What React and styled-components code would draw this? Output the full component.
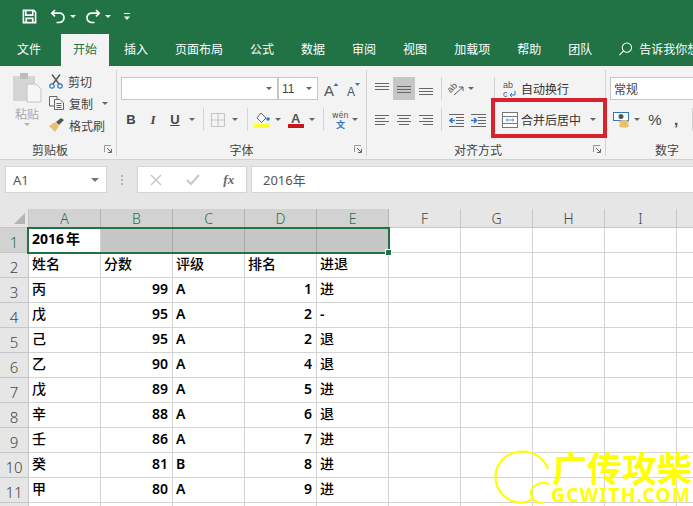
import styled, { createGlobalStyle } from "styled-components";

const CJK = `"Noto Sans CJK SC", "Noto Sans", sans-serif`;
const GREEN = "#217346";

const Global = createGlobalStyle`
    html, body { margin: 0; padding: 0; background: #fff; }
    #root { width: 693px; height: 506px; overflow: hidden; }
`;

const Page = styled.div`
    position: relative;
    width: 693px;
    height: 506px;
    overflow: hidden;
    font-family: ${CJK};
    font-size: 12px;
    color: #444;
`;

const TitleBar = styled.div`
    display: flex;
    align-items: center;
    height: 33px;
    padding-left: 20px;
    background: ${GREEN};
`;

const TitleIcon = styled.div`
    display: flex;
    align-items: center;
    justify-content: center;
    width: ${(p) => p.$w}px;
    margin-left: ${(p) => p.$ml || 0}px;
`;

const TabBar = styled.div`
    display: flex;
    align-items: stretch;
    height: 33px;
    padding-left: 5px;
    background: ${GREEN};
`;

const Tab = styled.div`
    display: flex;
    align-items: center;
    padding: 0 12px 4px;
    margin-right: ${(p) => (p.$first ? 8 : 3)}px;
    margin-top: 1px;
    color: ${(p) => (p.$active ? GREEN : "#fff")};
    background: ${(p) => (p.$active ? "#f3f3f3" : "transparent")};
    white-space: nowrap;
`;

const TellMe = styled.div`
    display: flex;
    align-items: center;
    gap: 6px;
    margin-left: 11px;
    padding-bottom: 2px;
    color: #fff;
    white-space: nowrap;
`;

const Ribbon = styled.div`
    position: relative;
    display: flex;
    height: 93px;
    background: #f3f3f3;
    border-bottom: 1px solid #d2d2d2;
    overflow: hidden;
`;

const Group = styled.div`
    position: relative;
    flex: none;
    display: flex;
    flex-direction: column;
    width: ${(p) => p.$w}px;
    height: 86px;
    margin-top: 4px;
    box-sizing: border-box;
    border-right: ${(p) => (p.$last ? "none" : "1px solid #d4d4d4")};
`;

const Rows = styled.div`
    flex: 1;
    display: flex;
    flex-direction: column;
    gap: 8px;
    padding: 7px 0 0 4px;
`;

const Row = styled.div`
    display: flex;
    align-items: center;
    height: 23px;
`;

const Tool = styled.div`
    flex: none;
    display: flex;
    align-items: center;
    justify-content: center;
    align-self: stretch;
    width: ${(p) => p.$w}px;
    background: ${(p) => (p.$on ? "#c6c6c6" : "transparent")};
    font-family: "Liberation Sans", sans-serif;
`;

const BoldTool = styled(Tool)`
    font-size: 13px;
    font-weight: 700;
    text-decoration: ${(p) => (p.$under ? "underline" : "none")};
`;

const ItalicTool = styled(Tool)`
    font-family: "Liberation Serif", serif;
    font-size: 13px;
    font-style: italic;
    font-weight: 700;
`;

const NumTool = styled(Tool)`
    font-size: 15px;
    font-weight: ${(p) => (p.$bold ? 700 : 400)};
`;

const Sep = styled.span`
    display: block;
    width: 1px;
    height: 23px;
    background: #d4d4d4;
`;

const Caret = styled.span`
    display: block;
    width: 0;
    height: 0;
    border-left: ${(p) => p.$s || 3}px solid transparent;
    border-right: ${(p) => p.$s || 3}px solid transparent;
    border-top: ${(p) => p.$s || 3}px solid ${(p) => p.$c || "#666"};
`;

const GroupLabel = styled.div`
    position: relative;
    height: 16px;
    padding-right: ${(p) => p.$pr || 0}px;
    width: ${(p) => (p.$w ? `${p.$w}px` : "auto")};
    line-height: 19px;
    text-align: center;
    color: #444;
`;

const Launcher = styled.svg`
    position: absolute;
    right: 4px;
    top: 5px;
`;

const ClipBody = styled.div`
    flex: 1;
    display: flex;
    padding-left: 12px;
`;

const Paste = styled.div`
    display: flex;
    flex-direction: column;
    align-items: center;
    width: 30px;
    margin-top: 2px;
    gap: 1px;
    color: #a8a8a8;
`;

const ClipList = styled.div`
    display: flex;
    flex-direction: column;
    margin-left: 7px;
`;

const ClipItem = styled.div`
    display: flex;
    align-items: center;
    gap: 5px;
    height: 22px;
    white-space: nowrap;
`;

const Input = styled.div`
    flex: none;
    display: flex;
    align-items: center;
    justify-content: space-between;
    box-sizing: border-box;
    width: ${(p) => p.$w}px;
    height: 23px;
    padding: 0 5px 0 3px;
    background: #fff;
    border: 1px solid #c6c6c6;
    font-family: "Liberation Sans", ${CJK};
`;

const WrapLabel = styled.span`
    flex: none;
    width: ${(p) => (p.$w ? `${p.$w}px` : "auto")};
    white-space: nowrap;
    color: #333;
`;

const RedBox = styled.div`
    position: absolute;
    left: 491px;
    top: 32px;
    box-sizing: border-box;
    width: 116px;
    height: 40px;
    border: 4px solid #d8222d;
`;

const FormulaStrip = styled.div`
    display: flex;
    align-items: center;
    height: 49px;
    padding: 0 0 10px 5px;
    box-sizing: border-box;
    background: #e6e6e6;
`;

const NameBox = styled.div`
    display: flex;
    align-items: center;
    justify-content: space-between;
    box-sizing: border-box;
    width: 102px;
    height: 27px;
    padding: 0 7px;
    background: #fff;
    border: 1px solid #d4d4d4;
    font-family: "Noto Sans", sans-serif;
    font-size: 13px;
    color: #555;
`;

const Dots = styled.div`
    display: flex;
    flex-direction: column;
    gap: 2px;
    margin: 0 14px;
    span {
        display: block;
        width: 2px;
        height: 2px;
        background: #b4b4b4;
    }
`;

const FxBox = styled.div`
    display: flex;
    align-items: center;
    justify-content: space-around;
    box-sizing: border-box;
    width: 110px;
    height: 27px;
    background: #fff;
    border: 1px solid #d4d4d4;
    color: #666;
`;

const FxText = styled.span`
    font-family: "Liberation Serif", serif;
    font-style: italic;
    font-weight: 700;
    font-size: 13px;
`;

const FormulaInput = styled.div`
    flex: 1;
    display: flex;
    align-items: center;
    box-sizing: border-box;
    height: 27px;
    margin-left: 4px;
    padding-left: 11px;
    background: #fff;
    border: 1px solid #d4d4d4;
    border-right: none;
    font-family: "Noto Sans", ${CJK};
    font-size: 13px;
    color: #555;
`;

const Sheet = styled.div`
    position: relative;
    display: grid;
    grid-template-columns: 29px repeat(10, 72px);
    grid-template-rows: 19px repeat(12, 25px);
`;

const Corner = styled.div`
    display: flex;
    align-items: flex-end;
    justify-content: flex-end;
    padding: 0 3px 3px 0;
    background: #e6e6e6;
    border-right: 1px solid #c6c6c6;
    border-bottom: 1px solid #c6c6c6;
    box-sizing: border-box;
`;

const ColHead = styled.div`
    display: flex;
    align-items: center;
    justify-content: center;
    box-sizing: border-box;
    background: ${(p) => (p.$sel ? "#d2d2d2" : "#e6e6e6")};
    color: ${(p) => (p.$sel ? GREEN : "#444")};
    border-right: 1px solid ${(p) => (p.$sel ? "#b4b4b4" : "#c6c6c6")};
    border-bottom: 1px solid #c6c6c6;
    font-family: "Noto Sans", sans-serif;
    font-size: 14px;
    font-weight: 300;
`;

const RowHead = styled.div`
    display: flex;
    align-items: flex-end;
    justify-content: center;
    box-sizing: border-box;
    background: ${(p) => (p.$sel ? "#d2d2d2" : "#e6e6e6")};
    color: ${(p) => (p.$sel ? GREEN : "#444")};
    border-right: 1px solid #c6c6c6;
    border-bottom: 1px solid #c6c6c6;
    font-family: "Noto Sans", sans-serif;
    font-size: 15px;
    font-weight: 300;
    line-height: 20px;
`;

const Cell = styled.div`
    display: flex;
    align-items: center;
    justify-content: ${(p) => (p.$num ? "flex-end" : "flex-start")};
    box-sizing: border-box;
    padding: 0 4px 4px 3px;
    white-space: nowrap;
    background: ${(p) => (p.$gray ? "#c6c6c6" : "#fff")};
    border-right: 1px solid ${(p) => (p.$gray ? "#a8a8a8" : "#d4d4d4")};
    border-bottom: 1px solid #d4d4d4;
    color: #000;
    font-family: ${(p) => (p.$latin ? `"Noto Sans", sans-serif` : CJK)};
    font-size: 14px;
    font-weight: ${(p) => (p.$latin ? 600 : 500)};
`;

const TitleCell = styled(Cell)`
    font-family: "Noto Sans", ${CJK};
    font-weight: 700;
`;

const TitleYear = styled.span`
    margin-left: 2px;
    font-family: ${CJK};
`;

const Selection = styled.div`
    position: absolute;
    left: 27px;
    top: 18px;
    box-sizing: border-box;
    width: 363px;
    height: 27px;
    border: 2px solid ${GREEN};
    pointer-events: none;
    &::after {
        content: "";
        position: absolute;
        right: -4px;
        bottom: -4px;
        width: 5px;
        height: 5px;
        background: ${GREEN};
        border: 1px solid #fff;
    }
`;

const Watermark = styled.div`
    position: absolute;
    left: 494px;
    top: 450px;
    display: flex;
    color: #ffff00;
    pointer-events: none;
`;

const MarkText = styled.div`
    display: flex;
    flex-direction: column;
    margin-top: -2px;
    margin-left: 1px;
`;

const MarkTitle = styled.div`
    margin-left: 1px;
    font-family: ${CJK};
    font-size: 35px;
    font-weight: 700;
    line-height: 38px;
    white-space: nowrap;
`;

const MarkSub = styled.div`
    font-family: "Noto Sans", sans-serif;
    font-size: 19px;
    font-weight: 700;
    line-height: 19px;
    letter-spacing: 1.4px;
    white-space: nowrap;
`;

const Launch = () => (
    <Launcher width="8" height="8" viewBox="0 0 8 8" fill="none">
        <path d="M0.5 7V0.5H7" stroke="#999" />
        <path d="M3 3L7 7M4 7.5H7.5V4" stroke="#666" />
    </Launcher>
);

const Lines = ({ rows }) => (
    <svg width="16" height="16" viewBox="0 0 16 16" stroke="#666" fill="none">
        {rows.map(([y, a, b]) => (
            <path key={y} d={`M${a} ${y}.5H${b}`} />
        ))}
    </svg>
);

const AlignTop = () => <Lines rows={[[2, 1, 15], [5, 1, 15], [8, 1, 15]]} />;
const AlignMid = () => <Lines rows={[[5, 1, 15], [8, 1, 15], [11, 1, 15]]} />;
const AlignBot = () => <Lines rows={[[7, 1, 15], [10, 1, 15], [13, 1, 15]]} />;
const AlignL = () => <Lines rows={[[3, 1, 15], [6, 1, 11], [9, 1, 15], [12, 1, 11]]} />;
const AlignC = () => <Lines rows={[[3, 1, 15], [6, 3, 13], [9, 1, 15], [12, 3, 13]]} />;
const AlignR = () => <Lines rows={[[3, 1, 15], [6, 5, 15], [9, 1, 15], [12, 5, 15]]} />;

const Indent = ({ flip }) => (
    <svg width="17" height="16" viewBox="0 0 17 16" fill="none">
        <path d="M1 2.5H16M8 5.5H16M8 8.5H16M8 11.5H16M1 14.5H16" stroke="#666" />
        {flip ? (
            <path d="M1 8.5H6M4 6L6.5 8.5L4 11" stroke="#2b79c2" strokeWidth="1.6" />
        ) : (
            <path d="M7 8.5H2M4.5 6L2 8.5L4.5 11" stroke="#2b79c2" strokeWidth="1.6" />
        )}
    </svg>
);

const cols = ["A", "B", "C", "D", "E", "F", "G", "H", "I", "J"];

const data = [
    ["丙", 99, "A", 1, "进"],
    ["戊", 95, "A", 2, "-"],
    ["己", 95, "A", 2, "退"],
    ["乙", 90, "A", 4, "退"],
    ["戊", 89, "A", 5, "进"],
    ["辛", 88, "A", 6, "退"],
    ["壬", 86, "A", 7, "进"],
    ["癸", 81, "B", 8, "进"],
    ["甲", 80, "A", 9, "进"],
    ["", "", "", "", ""],
];

const tabs = ["开始", "插入", "页面布局", "公式", "数据", "审阅", "视图", "加载项", "帮助", "团队"];

function Toolbar() {
    return (
        <>
            <TitleBar>
                <TitleIcon $w={18}>
                    <svg width="15" height="15" viewBox="0 0 16 16" fill="none" stroke="#fff" strokeWidth="1.7">
                        <path d="M1.5 1.5H12.5L14.5 3.5V14.5H1.5Z" />
                        <path d="M4 2V6.5H11.5V2" />
                        <path d="M4.5 14.5V10H11.5V14.5" />
                    </svg>
                </TitleIcon>
                <TitleIcon $w={16} $ml={12}>
                    <svg width="16" height="16" viewBox="0 0 16 16" fill="none" stroke="#fff" strokeWidth="1.7">
                        <path d="M5 1L1.8 4.2L5 7.4" />
                        <path d="M2 4.2H9.5C12 4.2 14 6 14 8.6C14 11.3 12 13.5 9 13.5H6.5" />
                    </svg>
                </TitleIcon>
                <TitleIcon $w={14}><Caret $c="#fff" /></TitleIcon>
                <TitleIcon $w={16} $ml={5}>
                    <svg width="16" height="16" viewBox="0 0 16 16" fill="none" stroke="#fff" strokeWidth="1.7">
                        <path d="M11 1L14.2 4.2L11 7.4" />
                        <path d="M14 4.2H6.5C4 4.2 2 6 2 8.6C2 11.3 4 13.5 7 13.5H9.5" />
                    </svg>
                </TitleIcon>
                <TitleIcon $w={14}><Caret $c="#fff" /></TitleIcon>
                <TitleIcon $w={24}>
                    <svg width="6" height="8" viewBox="0 0 6 8" fill="#fff">
                        <rect y="0" width="6" height="1" />
                        <path d="M0 3.5H6L3 7Z" />
                    </svg>
                </TitleIcon>
            </TitleBar>
            <TabBar>
                <Tab $first>文件</Tab>
                {tabs.map((t) => (
                    <Tab key={t} $active={t === "开始"}>{t}</Tab>
                ))}
                <TellMe>
                    <svg width="15" height="16" viewBox="0 0 16 16" fill="none" stroke="#fff" strokeWidth="1.1">
                        <circle cx="9.5" cy="6.5" r="5" />
                        <path d="M6 10L1.5 14.5" />
                    </svg>
                    告诉我你想要做什么
                </TellMe>
            </TabBar>
        </>
    );
}

function ClipboardGroup() {
    return (
        <Group $w={117}>
            <ClipBody>
                <Paste>
                    <svg width="30" height="32" viewBox="0 0 30 32">
                        <rect x="1" y="4" width="22" height="25" fill="#d6d4d6" />
                        <rect x="8" y="1" width="8" height="6" fill="#bdbbbd" />
                        <path d="M15 12H24L29 17V30H15Z" fill="#f6f6f6" stroke="#c4c4c4" />
                    </svg>
                    <span>粘贴</span>
                    <Caret $c="#b4b4b4" />
                </Paste>
                <ClipList>
                    <ClipItem>
                        <svg width="14" height="15" viewBox="0 0 14 15" fill="none">
                            <path d="M3 0.5L10 10M11 0.5L4 10" stroke="#555" strokeWidth="1.4" />
                            <circle cx="3" cy="12" r="2.2" stroke="#2b79c2" strokeWidth="1.2" />
                            <circle cx="11" cy="12" r="2.2" stroke="#2b79c2" strokeWidth="1.2" />
                        </svg>
                        剪切
                    </ClipItem>
                    <ClipItem>
                        <svg width="15" height="14" viewBox="0 0 15 14" fill="#f6f6f6" stroke="#666">
                            <path d="M0.5 0.5H8V10H0.5Z" />
                            <path d="M5.5 3.5H11L14.5 7V13.5H5.5Z" />
                            <path d="M7.5 7.5H12.5M7.5 9.5H12.5M7.5 11.5H12.5" />
                        </svg>
                        <span>复制</span>
                        <Tool $w={14}><Caret /></Tool>
                    </ClipItem>
                    <ClipItem>
                        <svg width="15" height="14" viewBox="0 0 15 14">
                            <path d="M0 8L6 4L10 8L6 14Z" fill="#eabf74" />
                            <path d="M7 4L12 0L15 2L10 7Z" fill="#555" />
                        </svg>
                        格式刷
                    </ClipItem>
                </ClipList>
            </ClipBody>
            <GroupLabel $pr={16}>剪贴板<Launch /></GroupLabel>
        </Group>
    );
}

function FontGroup() {
    return (
        <Group $w={250}>
            <Rows>
                <Row>
                    <Input $w={157}>
                        <span />
                        <Caret />
                    </Input>
                    <Input $w={40}>
                        <span>11</span>
                        <Caret />
                    </Input>
                    <Tool $w={28}>
                        <svg width="18" height="18" viewBox="0 0 18 18">
                            <text x="1" y="16" fontSize="15" fill="#555" fontFamily="Liberation Sans">A</text>
                            <path d="M10.5 6L13 3L15.5 6Z" fill="#2b79c2" />
                        </svg>
                    </Tool>
                    <Tool $w={16}>
                        <svg width="16" height="18" viewBox="0 0 16 18">
                            <text x="1" y="16" fontSize="12" fill="#555" fontFamily="Liberation Sans">A</text>
                            <path d="M9 3H14L11.5 6Z" fill="#2b79c2" />
                        </svg>
                    </Tool>
                </Row>
                <Row>
                    <BoldTool $w={20}>B</BoldTool>
                    <ItalicTool $w={24}>I</ItalicTool>
                    <BoldTool $w={20} $under>U</BoldTool>
                    <Tool $w={14}><Caret /></Tool>
                    <Tool $w={8}><Sep /></Tool>
                    <Tool $w={22}>
                        <svg width="14" height="14" viewBox="0 0 14 14" fill="none" stroke="#999" strokeDasharray="1 1">
                            <path d="M0.5 0.5H13.5V13.5H0.5ZM0.5 7H13.5M7 0.5V13.5" />
                        </svg>
                    </Tool>
                    <Tool $w={12}><Caret /></Tool>
                    <Tool $w={12}><Sep /></Tool>
                    <Tool $w={18}>
                        <svg width="17" height="16" viewBox="0 0 17 16">
                            <path d="M7 1L12 6L7.5 10.5L3 6Z" fill="#fff" stroke="#666" />
                            <circle cx="14" cy="7" r="1.8" fill="#2b79c2" />
                            <rect x="0" y="12" width="16" height="4" fill="#ffff33" />
                        </svg>
                    </Tool>
                    <Tool $w={14}><Caret /></Tool>
                    <Tool $w={22}>
                        <svg width="16" height="16" viewBox="0 0 16 16">
                            <text x="3" y="11" fontSize="13" fontWeight="700" fill="#555" fontFamily="Liberation Sans">A</text>
                            <rect x="0" y="12" width="16" height="4" fill="#c5161d" />
                        </svg>
                    </Tool>
                    <Tool $w={10}><Caret /></Tool>
                    <Tool $w={12}><Sep /></Tool>
                    <Tool $w={22}>
                        <svg width="18" height="18" viewBox="0 0 18 18">
                            <text x="1" y="7" fontSize="8" fill="#555" fontFamily="DejaVu Sans">wén</text>
                            <text x="5" y="17" fontSize="9" fontWeight="700" fill="#2b79c2" fontFamily="Noto Sans CJK SC">文</text>
                        </svg>
                    </Tool>
                    <Tool $w={8}><Caret /></Tool>
                </Row>
            </Rows>
            <GroupLabel>字体<Launch /></GroupLabel>
        </Group>
    );
}

function AlignGroup() {
    return (
        <Group $w={239}>
            <Rows>
                <Row>
                    <Tool $w={22}><AlignTop /></Tool>
                    <Tool $w={22} $on><AlignMid /></Tool>
                    <Tool $w={22}><AlignBot /></Tool>
                    <Tool $w={8}><Sep /></Tool>
                    <Tool $w={22}>
                        <svg width="18" height="17" viewBox="0 0 18 17" fill="none">
                            <text x="1" y="11" fontSize="9" fill="#555" transform="rotate(-45 5 9)" fontFamily="Liberation Sans">ab</text>
                            <path d="M7 15L16 7M16 7V11M16 7H12" stroke="#555" />
                        </svg>
                    </Tool>
                    <Tool $w={8}><Caret /></Tool>
                    <Tool $w={15} />
                    <Tool $w={8}><Sep /></Tool>
                    <Tool $w={23}>
                        <svg width="14" height="18" viewBox="0 0 14 18">
                            <text x="0" y="8" fontSize="9" fill="#555" fontFamily="Liberation Sans">ab</text>
                            <text x="0" y="17" fontSize="9" fill="#555" fontFamily="Liberation Sans">c</text>
                            <path d="M12 11V15H7M9 13L7 15L9 17" fill="none" stroke="#2b79c2" />
                        </svg>
                    </Tool>
                    <WrapLabel>自动换行</WrapLabel>
                </Row>
                <Row>
                    <Tool $w={22}><AlignL /></Tool>
                    <Tool $w={22}><AlignC /></Tool>
                    <Tool $w={22}><AlignR /></Tool>
                    <Tool $w={8}><Sep /></Tool>
                    <Tool $w={22}><Indent /></Tool>
                    <Tool $w={22}><Indent flip /></Tool>
                    <Tool $w={9} />
                    <Tool $w={23}>
                        <svg width="16" height="16" viewBox="0 0 16 16" fill="#fff" stroke="#777">
                            <rect x="0.5" y="0.5" width="15" height="15" />
                            <path d="M0.5 4.5H15.5M0.5 11.5H15.5" />
                            <path d="M4 8H12M5.5 6.5L4 8L5.5 9.5M10.5 6.5L12 8L10.5 9.5" fill="none" stroke="#5a8fc0" />
                        </svg>
                    </Tool>
                    <WrapLabel $w={60}>合并后居中</WrapLabel>
                    <Tool $w={24}><Caret /></Tool>
                </Row>
            </Rows>
            <GroupLabel $pr={16}>对齐方式<Launch /></GroupLabel>
        </Group>
    );
}

function NumberGroup() {
    return (
        <Group $w={87} $last>
            <Rows>
                <Row>
                    <Input $w={100}>
                        <span>常规</span>
                    </Input>
                </Row>
                <Row>
                    <Tool $w={22}>
                        <svg width="17" height="16" viewBox="0 0 17 16">
                            <rect x="0.5" y="0.5" width="15" height="8" fill="#fff" stroke="#2b79c2" />
                            <circle cx="8" cy="4.5" r="2.5" fill="#555" />
                            <ellipse cx="11" cy="10" rx="5" ry="2" fill="#eabf74" />
                            <ellipse cx="11" cy="13.5" rx="5" ry="2" fill="#eabf74" />
                        </svg>
                    </Tool>
                    <Tool $w={10}><Caret /></Tool>
                    <NumTool $w={26}>%</NumTool>
                    <NumTool $w={16} $bold>,</NumTool>
                    <Tool $w={16}><Sep /></Tool>
                </Row>
            </Rows>
            <GroupLabel $w={122}>数字</GroupLabel>
        </Group>
    );
}

function FormulaBar() {
    return (
        <FormulaStrip>
            <NameBox>
                A1
                <Caret $c="#777" $s={4} />
            </NameBox>
            <Dots><span /><span /><span /></Dots>
            <FxBox>
                <svg width="12" height="12" viewBox="0 0 12 12" fill="none" stroke="#c8c8c8" strokeWidth="1.6">
                    <path d="M1 1L11 11M11 1L1 11" />
                </svg>
                <svg width="14" height="12" viewBox="0 0 14 12" fill="none" stroke="#c8c8c8" strokeWidth="2">
                    <path d="M1 6L5 10L13 1" />
                </svg>
                <FxText>fx</FxText>
            </FxBox>
            <FormulaInput>2016年</FormulaInput>
        </FormulaStrip>
    );
}

function DataRow({ n, r }) {
    return (
        <>
            <RowHead>{n}</RowHead>
            <Cell>{r[0]}</Cell>
            <Cell $num $latin>{r[1]}</Cell>
            <Cell $latin>{r[2]}</Cell>
            <Cell $num $latin>{r[3]}</Cell>
            <Cell $latin={r[4] === "-"}>{r[4]}</Cell>
            {cols.slice(5).map((c) => <Cell key={c} />)}
        </>
    );
}

function Grid() {
    return (
        <Sheet>
            <Corner>
                <svg width="11" height="11" viewBox="0 0 11 11"><path d="M11 0V11H0Z" fill="#b4b4b4" /></svg>
            </Corner>
            {cols.map((c, i) => (
                <ColHead key={c} $sel={i < 5}>{c}</ColHead>
            ))}
            <RowHead $sel>1</RowHead>
            <TitleCell>2016<TitleYear>年</TitleYear></TitleCell>
            {cols.slice(1).map((c, i) => (
                <Cell key={c} $gray={i < 4} />
            ))}
            <RowHead>2</RowHead>
            {["姓名", "分数", "评级", "排名", "进退"].map((t) => (
                <Cell key={t}>{t}</Cell>
            ))}
            {cols.slice(5).map((c) => <Cell key={c} />)}
            {data.map((r, i) => (
                <DataRow key={i} n={i + 3} r={r} />
            ))}
            <Selection />
        </Sheet>
    );
}

export default function App() {
    return (
        <Page>
            <Global />
            <Toolbar />
            <Ribbon>
                <ClipboardGroup />
                <FontGroup />
                <AlignGroup />
                <NumberGroup />
                <RedBox />
            </Ribbon>
            <FormulaBar />
            <Grid />
            <Watermark>
                <svg width="56" height="54" viewBox="0 0 56 54" fill="none" stroke="#ffff00" strokeWidth="2.2">
                    <path d="M54 19C50 8 40 1.5 28 1.5C13 1.5 1.5 13 1.5 27C1.5 41 13 52.5 27 52.5C32 52.5 36 51 39 48" />
                    <path d="M55 34C47 31 37 35 37 43C37 49 42 53 49 53" />
                </svg>
                <MarkText>
                    <MarkTitle>广传攻柴</MarkTitle>
                    <MarkSub>GCWITH.COM</MarkSub>
                </MarkText>
            </Watermark>
        </Page>
    );
}
